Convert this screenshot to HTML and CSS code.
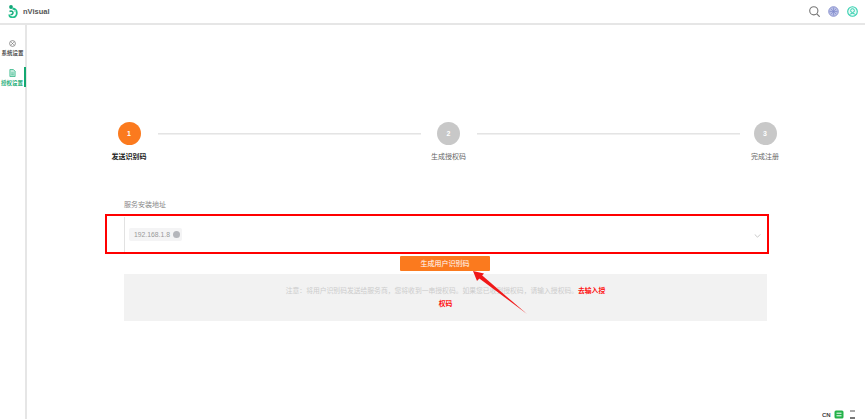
FILE: index.html
```html
<!DOCTYPE html>
<html lang="zh">
<head>
<meta charset="utf-8">
<title>nVisual</title>
<link rel="stylesheet" href="styles.css">
</head>
<body>
<header class="topbar">
  <div class="brand">
    <svg class="logo" viewBox="0 0 10 13" width="10" height="13"><circle cx="3" cy="2" r="1.900" fill="#12a678"/><path d="M4.500 3.500c2.500.3 4.300 1.800 4.300 4.500 0 2.900-2.100 4.300-4.300 4.300-2 0-3.300-1.100-3.300-2.700" fill="none" stroke="#1fbf8a" stroke-width="1.800"/><path d="M1.500 6.500c1.500-.8 3.500-.3 3.500 1.300S3.500 9.800 2.600 9.200" fill="none" stroke="#13a87a" stroke-width="1.500"/><circle cx="7" cy="6" r="1" fill="#8fe6c8"/></svg>
    <span class="brand-name">nVisual</span>
  </div>
  <div class="top-icons">
    <svg viewBox="0 0 11 11" width="11" height="11"><circle cx="4.800" cy="4.800" r="4.100" fill="none" stroke="#777" stroke-width="1.100"/><path d="M7.800 7.800l2.900 2.900" stroke="#777" stroke-width="1.200"/></svg>
    <svg viewBox="0 0 11 11" width="11" height="11"><circle cx="5.500" cy="5.500" r="4.800" fill="#b9bfe6" stroke="#8d95cf" stroke-width="1"/><path d="M3 3l5 5M8 3l-5 5M5.500 1.500v8M1.500 5.500h8" stroke="#8089cc" stroke-width=".7"/></svg>
    <svg viewBox="0 0 11 11" width="11" height="11"><circle cx="5.500" cy="5.500" r="4.800" fill="#e6faf5" stroke="#35d0b0" stroke-width="1.100"/><circle cx="5.500" cy="4.600" r="1.900" fill="none" stroke="#35d0b0" stroke-width="1"/><path d="M2.500 8.700c1.400-1.700 4.600-1.700 6 0" fill="none" stroke="#35d0b0" stroke-width="1"/></svg>
  </div>
</header>
<div class="shell">
  <nav class="sidebar">
    <a class="nav-item">
      <svg viewBox="0 0 8 8" width="7" height="7"><circle cx="4" cy="4" r="3.300" fill="none" stroke="#666" stroke-width=".8"/><path d="M2.500 2.500l3 3M5.500 2.500l-3 3" stroke="#666" stroke-width=".7"/></svg>
      <span>系统设置</span>
    </a>
    <a class="nav-item active">
      <svg viewBox="0 0 8 9" width="7" height="8"><path d="M1 .5h4l2 2v6H1z" fill="#bfe9da" stroke="#22b07d" stroke-width=".8"/><path d="M2.500 4.500h3M2.500 6.500h3" stroke="#22b07d" stroke-width=".7"/></svg>
      <span>授权设置</span>
    </a>
  </nav>
  <main class="content">
    <ol class="steps">
      <li class="step current"><span class="dot">1</span><span class="step-label">发送识别码</span></li>
      <li class="rule rule-first"></li>
      <li class="step"><span class="dot">2</span><span class="step-label">生成授权码</span></li>
      <li class="rule rule-second"></li>
      <li class="step"><span class="dot">3</span><span class="step-label">完成注册</span></li>
    </ol>
    <section class="form">
      <div class="field-label">服务安装地址</div>
      <div class="select">
        <span class="tag">192.168.1.8<i class="tag-x"></i></span>
        <svg class="chev" viewBox="0 0 8 5" width="7" height="4"><path d="M.5.500L4 4l3.500-3.500" fill="none" stroke="#aaa" stroke-width=".8"/></svg>
      </div>
      <div class="action"><button class="primary">生成用户识别码</button></div>
      <p class="note">注意：将用户识别码发送给服务商，您将收到一串授权码。如果您已收到授权码，请输入授权码。<b>去输入授权码</b></p>
    </section>
  </main>
</div>
<div class="mark-box"></div>
<svg class="mark-arrow" viewBox="0 0 70 55" width="70" height="55"><path d="M57 44L10.500 4 8 7.500z" fill="#f01818"/><path d="M3 1l11 2.500-7 7.500z" fill="#f01818"/></svg>
<div class="ime"><span>CN</span><svg viewBox="0 0 10 9" width="10" height="9"><rect x=".5" y=".5" width="9" height="8" rx="1.500" fill="#24b24a"/><path d="M2.500 3.200h5M7.500 5.800h-5" stroke="#fff" stroke-width="1"/></svg><i class="ime-dots"></i></div>
</body>
</html>
```
FILE: styles.css
```css
* { box-sizing: border-box; }
html, body { margin: 0; height: 100%; }
body {
  position: relative;
  width: 865px;
  height: 419px;
  overflow: hidden;
  background: #fff;
  font-family: "Liberation Sans", "Noto Sans CJK SC", sans-serif;
  color: #666;
}
.topbar {
  height: 25px;
  display: flex;
  align-items: center;
  justify-content: space-between;
  padding: 0 7px 0 8px;
  border-bottom: 2px solid #e6e6e6;
}
.brand { display: flex; align-items: center; gap: 5px; }
.logo { display: block; }
.brand-name { font-size: 7.500px; font-weight: 700; color: #555; }
.top-icons { display: flex; align-items: center; gap: 8px; }
.top-icons svg { display: block; }
.shell { display: flex; height: 394px; }
.sidebar {
  width: 27px;
  flex: none;
  border-right: 2px solid #e6e6e6;
  padding-top: 13px;
  display: flex;
  flex-direction: column;
  gap: 9px;
}
.nav-item {
  height: 20px;
  padding-top: 2px;
  display: flex;
  flex-direction: column;
  align-items: center;
  gap: 3px;
  font-size: 5.500px;
  line-height: 7px;
  color: #555;
  font-weight: 700;
}
.nav-item svg { display: block; flex: none; }
.nav-item.active {
  color: #1fae7a;
  border-right: 2px solid #13a870;
  margin-right: -1px;
}
.content { flex: 1; padding: 97px 0 0 0; }
.steps {
  list-style: none;
  margin: 0 0 0 82px;
  padding: 0;
  width: 676px;
  display: flex;
  align-items: flex-start;
}
.step {
  width: 40px;
  flex: none;
  display: flex;
  flex-direction: column;
  align-items: center;
  font-size: 7px;
  line-height: 9px;
  color: #666;
}
.dot {
  width: 23px;
  height: 23px;
  border-radius: 50%;
  background: #c8c8c8;
  color: #fff;
  display: flex;
  align-items: center;
  justify-content: center;
  font-size: 7px;
  font-weight: 700;
  margin-bottom: 7px;
}
.step-label { white-space: nowrap; }
.current .dot { background: #fb7a1e; }
.current .step-label { color: #222; font-weight: 700; }
.rule {
  flex: 1;
  height: 1px;
  background: #e4e4e4;
  box-shadow: 0 1px 0 #f0f0f0;
}
.rule-first { margin: 11px 7.500px 0 9px; }
.rule-second { margin: 11px 5px 0 8.500px; }
.form { margin: 39px 0 0 97px; width: 643px; }
.field-label { font-size: 7px; line-height: 9px; color: #888; margin-bottom: 8px; }
.select {
  height: 36px;
  border-left: 1px solid #e2e2e2;
  border-bottom: 1px solid #eee;
  display: flex;
  align-items: center;
  justify-content: space-between;
  padding: 0 6px 0 4px;
}
.tag {
  height: 13px;
  padding: 0 2px 0 5px;
  display: flex;
  align-items: center;
  gap: 3.500px;
  background: #f4f4f5;
  border-radius: 2px;
  font-size: 6.800px;
  color: #999;
}
.tag-x {
  width: 7px;
  height: 7px;
  border-radius: 50%;
  background: #b4b6bb;
}
.chev { display: block; margin-top: 3px; }
.action { display: flex; justify-content: center; margin-top: 3px; padding-right: 1px; }
.primary {
  width: 90px;
  height: 15px;
  padding: 0;
  border: 0;
  border-radius: 1px;
  background: #fb7a1e;
  color: #fff;
  font: 7px/15px "Liberation Sans", "Noto Sans CJK SC", sans-serif;
}
.note {
  margin: 3px 0 0;
  height: 47px;
  padding: 10px 160px 0;
  background: #f2f2f2;
  font-size: 6.800px;
  line-height: 13px;
  color: #ccc;
  text-align: center;
}
.note b { color: #f11; font-weight: 700; }
.mark-box {
  position: absolute;
  left: 105px;
  top: 214px;
  width: 664px;
  height: 40px;
  border: 2px solid #f00;
}
.mark-arrow { position: absolute; left: 470px; top: 270px; }
.ime {
  position: absolute;
  left: 822px;
  top: 410px;
  display: flex;
  align-items: center;
  gap: 3px;
  font-size: 6px;
  font-weight: 700;
  color: #444;
}
.ime svg { display: block; }
.ime-dots {
  width: 5px;
  height: 9px;
  margin-left: 3px;
  border-top: 2px solid #aaa;
  border-bottom: 2px solid #777;
}
```
